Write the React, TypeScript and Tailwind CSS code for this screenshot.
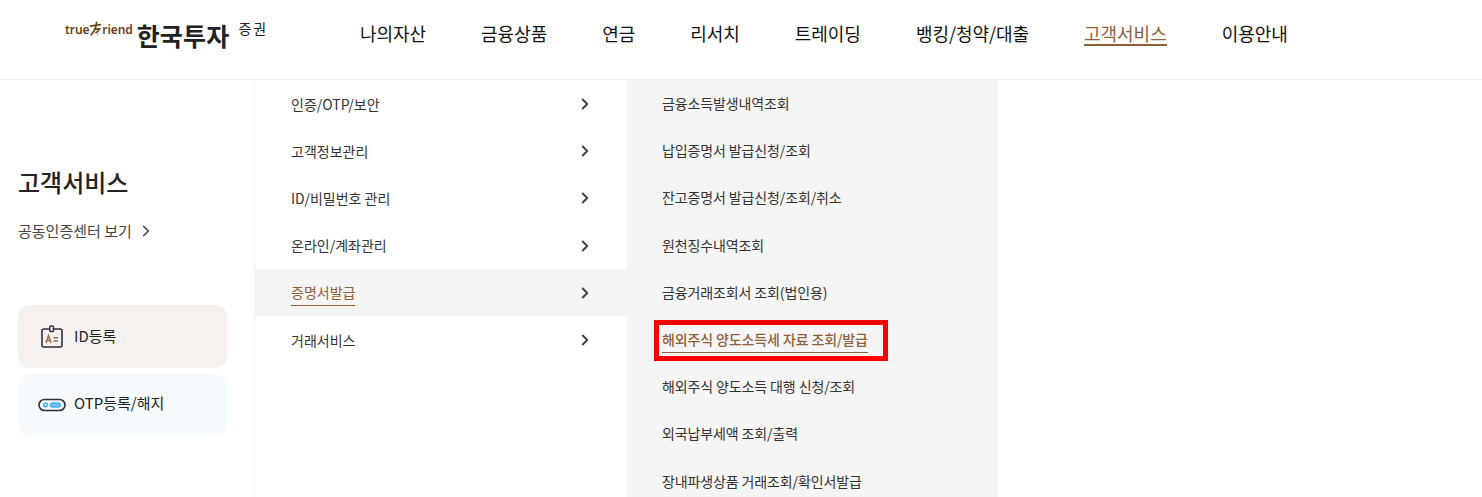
import { ChevronRight } from "lucide-react"

const NAV = ["나의자산", "금융상품", "연금", "리서치", "트레이딩", "뱅킹/청약/대출", "고객서비스", "이용안내"]

const MENU = ["인증/OTP/보안", "고객정보관리", "ID/비밀번호 관리", "온라인/계좌관리", "증명서발급", "거래서비스"]

const SUB_MENU = [
  "금융소득발생내역조회",
  "납입증명서 발급신청/조회",
  "잔고증명서 발급신청/조회/취소",
  "원천징수내역조회",
  "금융거래조회서 조회(법인용)",
  "해외주식 양도소득세 자료 조회/발급",
  "해외주식 양도소득 대행 신청/조회",
  "외국납부세액 조회/출력",
  "장내파생상품 거래조회/확인서발급",
]

const Logo = () => (
  <div className="flex items-start shrink-0 w-[204px] ml-[65px] whitespace-nowrap">
    <div className="flex items-center mt-[21px] text-[12px] font-semibold leading-none tracking-[-0.1px] text-[#6b3d14] font-['Noto_Sans','Noto_Sans_CJK_KR',sans-serif]">
      <span>true</span>
      <svg width="13" height="20" viewBox="0 0 16 20" className="-mt-[2px]">
        <path d="M1 6.5 L15 4.5 M9.5 1 C9 7 7 13 2 18 M6 10.5 L13 10 C12 12 10.5 13.5 8 15" stroke="#6b3d14" strokeWidth="2" fill="none" />
        <path d="M8 14 L12 18" stroke="#5b9bd5" strokeWidth="1" fill="none" />
      </svg>
      <span>riend</span>
    </div>
    <span className="ml-[4px] mt-[19px] text-[25px] font-semibold leading-[33px] text-[#222] tracking-[0.2px]">한국투자</span>
    <span className="ml-[9px] mt-[18px] text-[14px] leading-[20px] text-[#222] tracking-[2px]">증권</span>
  </div>
)

const IdIcon = () => (
  <svg width="24" height="24" viewBox="0 0 24 24" fill="none">
    <rect x="2" y="4" width="20" height="18" rx="2" stroke="#2d3142" strokeWidth="1.6" fill="#f6f1ee" />
    <rect x="9.8" y="1" width="3.6" height="5.5" rx="0.8" stroke="#2d3142" strokeWidth="1.4" fill="#f6f1ee" />
    <path d="M6 18 L8.5 10.5 L11 18 M7 15.5 L10 15.5" stroke="#9a6a4a" strokeWidth="1.4" />
    <path d="M13.5 12.8 H18 M13.5 16 H18" stroke="#9a6a4a" strokeWidth="1.4" />
  </svg>
)

const OtpIcon = () => (
  <svg width="28" height="14" viewBox="0 0 28 14" fill="none">
    <rect x="1" y="1.5" width="26" height="11" rx="5.5" stroke="#2d3142" strokeWidth="1.6" fill="#f5fafd" />
    <circle cx="7.5" cy="7" r="1.8" stroke="#1f9bea" strokeWidth="1.3" />
    <rect x="12" y="4.8" width="10.5" height="4.4" rx="2.2" fill="#6cc0f5" stroke="#1f9bea" strokeWidth="0.8" />
  </svg>
)

export default function App() {
  return (
    <div className="w-[1482px] h-[497px] overflow-hidden bg-white text-[#222] font-['Noto_Sans_CJK_KR','Noto_Sans',sans-serif]">
      <header className="flex h-[80px] border-b border-[#f2f2f2]">
        <Logo />
        <nav className="flex gap-[55px] ml-[91px] pt-[20px] text-[18px] leading-[27px] text-[#111] tracking-[-0.04px] whitespace-nowrap">
          {NAV.map((item) => (
            <a key={item} className={item === "고객서비스" ? "h-[26px] text-[#8f5f3c] border-b-2 border-[#8f5f3c]" : "h-[26px]"}>
              {item}
            </a>
          ))}
        </nav>
      </header>

      <div className="flex h-[417px]">
        <aside className="w-[255px] shrink-0 border-r border-[#f2f2f2] px-[18px] pt-[83px]">
          <h2 className="text-[24px] font-medium leading-[38px] text-[#222]">고객서비스</h2>
          <div className="flex items-center mt-[18px] text-[15px] leading-[24px] text-[#444]">
            공동인증센터 보기
            <ChevronRight className="w-[18px] h-[18px] ml-[5px] text-[#444]" strokeWidth={2.2} />
          </div>
          <div className="mt-[62px] flex flex-col gap-[6px] w-[209px]">
            <div className="flex items-center h-[63px] rounded-[12px] bg-[#f6f1ee] pl-[22px]">
              <IdIcon />
              <span className="ml-[10px] text-[15px] text-[#222]">ID등록</span>
            </div>
            <div className="flex items-center h-[62px] rounded-[12px] bg-[#f5fafd] pl-[20px]">
              <OtpIcon />
              <span className="ml-[8px] -mt-[3px] text-[15px] text-[#222]">OTP등록/해지</span>
            </div>
          </div>
        </aside>

        <ul className="w-[372px] shrink-0 text-[14px] text-[#333]">
          {MENU.map((item) => {
            const active = item === "증명서발급"
            return (
              <li key={item} className={`flex items-center justify-between h-[47.2px] pl-[36px] pr-[33px] ${active ? "bg-[#f5f5f5]" : ""}`}>
                <span className={active ? "text-[#8f5f3c] border-b border-[#8f5f3c] leading-[26px]" : "leading-[26px]"}>{item}</span>
                <ChevronRight className="w-[18px] h-[18px] mt-[1px] text-[#444]" strokeWidth={2.6} />
              </li>
            )
          })}
        </ul>

        <ul className="w-[371px] shrink-0 bg-[#f5f5f5] text-[14px] text-[#333] tracking-[-0.12px] -mt-[0.5px]">
          {SUB_MENU.map((item) => {
            const active = item.startsWith("해외주식 양도소득세")
            return (
              <li key={item} className="flex items-center h-[47.2px] pl-[35px]">
                {active ? (
                  <span className="relative text-[#8f5f3c] font-medium border-b border-[#8f5f3c] leading-[26px]">
                    {item}
                    <span className="absolute -left-[8px] -right-[20px] -top-[6px] -bottom-[9px] border-[5px] border-[#ff0000]" />
                  </span>
                ) : (
                  <span className="leading-[26px]">{item}</span>
                )}
              </li>
            )
          })}
        </ul>
      </div>
    </div>
  )
}
